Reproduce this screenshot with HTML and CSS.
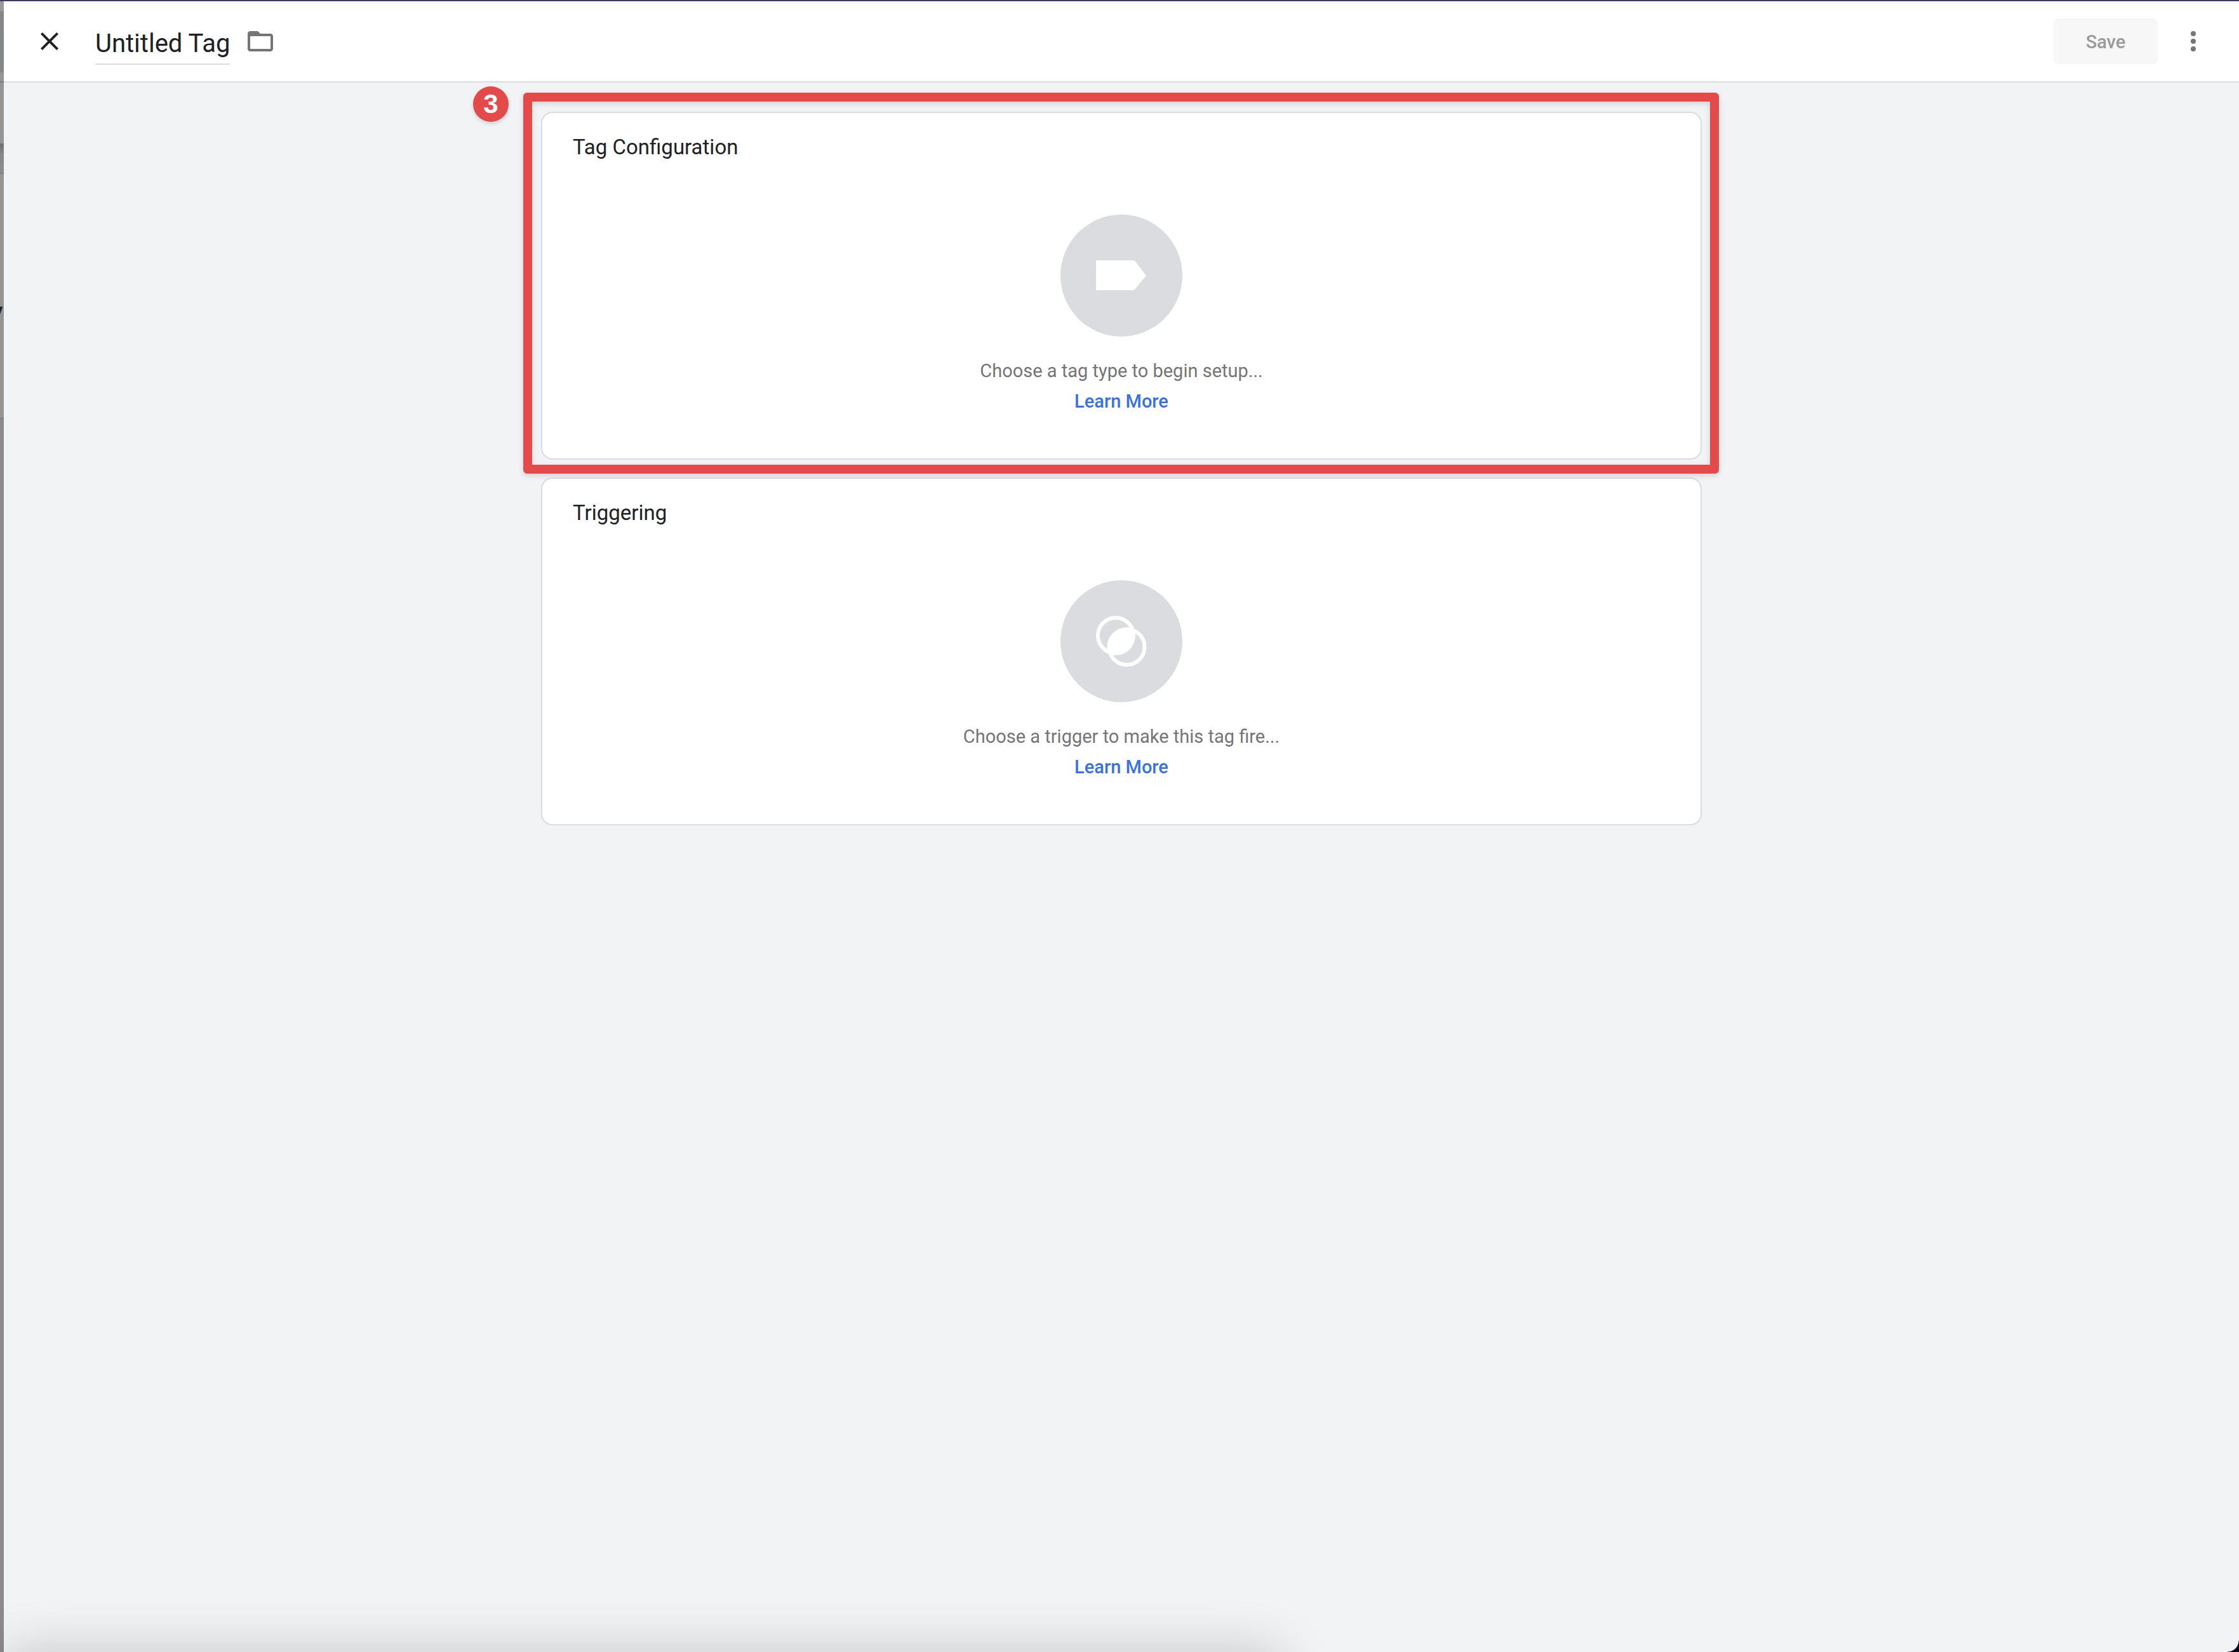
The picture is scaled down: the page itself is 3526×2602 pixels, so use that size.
FILE: index.html
```html
<!DOCTYPE html>
<html lang="en">
<head>
<meta charset="utf-8">
<title>Untitled Tag</title>
<link rel="stylesheet" href="styles.css">
</head>
<body>
<div class="app">
  <div class="rail" aria-hidden="true"><span class="rail-text">y</span></div>
  <div class="sheet">
    <header class="header">
      <button class="icon-button" type="button" aria-label="Close">
        <svg class="icon icon-dark" viewBox="0 0 24 24"><path d="M19 6.41L17.59 5 12 10.59 6.41 5 5 6.41 10.59 12 5 17.59 6.41 19 12 13.41 17.59 19 19 17.59 13.41 12z"/></svg>
      </button>
      <input class="name" type="text" value="Untitled Tag" aria-label="Tag name">
      <button class="icon-button" type="button" aria-label="Move to folder">
        <svg class="icon" viewBox="0 0 24 24"><path d="M9.17 6l2 2H20v10H4V6h5.17M10 4H4c-1.1 0-1.99.9-1.99 2L2 18c0 1.100.9 2 2 2h16c1.100 0 2-.9 2-2V8c0-1.100-.9-2-2-2h-8l-2-2z"/><path d="M3 5h7l2 3H3z"/></svg>
      </button>
      <div class="actions">
        <button class="save" type="button" disabled>Save</button>
        <button class="icon-button" type="button" aria-label="More actions">
          <svg class="icon" viewBox="0 0 24 24"><circle cx="12" cy="6" r="2"/><circle cx="12" cy="12" r="2"/><circle cx="12" cy="18" r="2"/></svg>
        </button>
      </div>
    </header>
    <main class="content">
      <section class="card">
        <h2 class="card-title">Tag Configuration</h2>
        <div class="empty">
          <svg class="disc" viewBox="0 0 192 192" aria-hidden="true">
            <circle class="disc-back" cx="96" cy="96" r="96"/>
            <path class="disc-fill" d="M57 72h58.500q1 0 1.500 1L135 96l-18 22q-.5 1-1.500 1H57q-1 0-1-1V73q0-1 1-1z"/>
          </svg>
          <p class="hint">Choose a tag type to begin setup...</p>
          <a class="link" href="#">Learn More</a>
        </div>
        <div class="highlight"></div>
        <span class="badge">3</span>
      </section>
      <section class="card">
        <h2 class="card-title">Triggering</h2>
        <div class="empty">
          <svg class="disc" viewBox="0 0 192 192" aria-hidden="true">
            <circle class="disc-back" cx="96" cy="96" r="96"/>
            <circle class="disc-ring" cx="87" cy="87" r="28"/>
            <circle class="disc-ring" cx="104.500" cy="105" r="28"/>
            <path class="disc-fill" d="M114.300 77.700A29 29 0 0 1 77.700 114.300A29 29 0 0 1 114.300 77.700z"/>
          </svg>
          <p class="hint">Choose a trigger to make this tag fire...</p>
          <a class="link" href="#">Learn More</a>
        </div>
      </section>
    </main>
  </div>
</div>
<div class="bottom-shadow"></div>
<div class="corner"></div>
</body>
</html>
```
FILE: styles.css
```css
* {
  box-sizing: border-box;
}

body {
  margin: 0;
  background: #f1f3f4;
  color: #202124;
  font-family: Roboto, sans-serif;
}

.app {
  display: flex;
  min-height: 100vh;
  border-top: 2px solid #3f3b66;
}

/* Sliver of the page that the sheet covers */
.rail {
  display: flex;
  justify-content: flex-end;
  flex: none;
  width: 6px;
  padding: 471px 2px 0 0;
  overflow: hidden;
  background: linear-gradient(#999 0 16px, #858688 16px 112px, #959595 112px 126px, #7e7e7e 126px 128px, #959595 128px 224px, #6e6f6f 224px, #858888 240px, #8c8c8c 270px, #7e7e7e 270px 272px, #959595 272px 656px, #7e7e7e 656px 658px, #8b8b8d 658px);
}

.rail-text {
  font-size: 28px;
  font-weight: 700;
  line-height: 32px;
}

.sheet {
  flex: 1;
  min-width: 0;
}

.header {
  display: flex;
  align-items: center;
  height: 128px;
  padding: 0 48px;
  border-bottom: 2px solid #dadce0;
  background: #fff;
}

.icon-button {
  display: flex;
  padding: 0;
  border: 0;
  background: none;
}

.icon {
  width: 48px;
  height: 48px;
  fill: #757575;
}

.icon-dark {
  fill: #202124;
}

.name {
  width: 212px;
  height: 70px;
  margin: 4px 24px 0 48px;
  padding: 4px 0 0;
  border: 0;
  border-bottom: 2px solid #dadce0;
  background: none;
  color: #202124;
  font: 400 40px/48px Roboto, sans-serif;
}

.actions {
  display: flex;
  align-items: center;
  gap: 32px;
  margin-left: auto;
}

.save {
  width: 164px;
  height: 72px;
  padding: 2px 0 0;
  border: 0;
  border-radius: 8px;
  background: #f7f7f7;
  color: #9b9b9b;
  font: 500 29px/40px Roboto, sans-serif;
}

.content {
  display: flex;
  flex-direction: column;
  gap: 28px;
  max-width: 1828px;
  margin: 0 auto;
  padding: 46px 0;
}

.card {
  position: relative;
  padding: 34px 48px 66px;
  border: 2px solid #dadce0;
  border-radius: 18px;
  background: #fff;
}

.card-title {
  margin: 0 0 86px;
  font-size: 33px;
  font-weight: 400;
  line-height: 40px;
}

.empty {
  display: flex;
  flex-direction: column;
  align-items: center;
}

.disc {
  width: 192px;
  height: 192px;
  margin-bottom: 30px;
}

.disc-back {
  fill: #dadce0;
}

.disc-fill {
  fill: #fff;
}

.disc-ring {
  fill: none;
  stroke: #fff;
  stroke-width: 6;
}

.hint {
  margin: 0;
  color: #757575;
  font-size: 29px;
  line-height: 48px;
}

.link {
  color: #3871e0;
  font-size: 29px;
  font-weight: 500;
  line-height: 48px;
  text-decoration: none;
}

/* Annotation over the first card */
.highlight {
  position: absolute;
  inset: -32px -29px -24px -30px;
  border: 14px solid #e54a4a;
  border-radius: 6px;
  filter: drop-shadow(0 3px 4px rgba(0, 0, 0, 0.14));
  pointer-events: none;
  z-index: 1;
}

.badge {
  position: absolute;
  top: -42px;
  left: -109px;
  width: 56px;
  height: 56px;
  border-radius: 50%;
  background: #e54a4a;
  box-shadow: 0 3px 6px rgba(0, 0, 0, 0.14);
  color: #fff;
  font: 700 42px/56px "Liberation Sans", sans-serif;
  text-align: center;
}

.bottom-shadow {
  position: fixed;
  top: 100%;
  left: 6px;
  width: 57%;
  height: 200px;
  box-shadow: 0 0 84px rgba(0, 0, 0, 0.19);
}

.corner {
  position: fixed;
  right: 0;
  bottom: 0;
  width: 18px;
  height: 18px;
  background: radial-gradient(circle at 0 0, transparent 17px, #05051a 18px);
}
```
